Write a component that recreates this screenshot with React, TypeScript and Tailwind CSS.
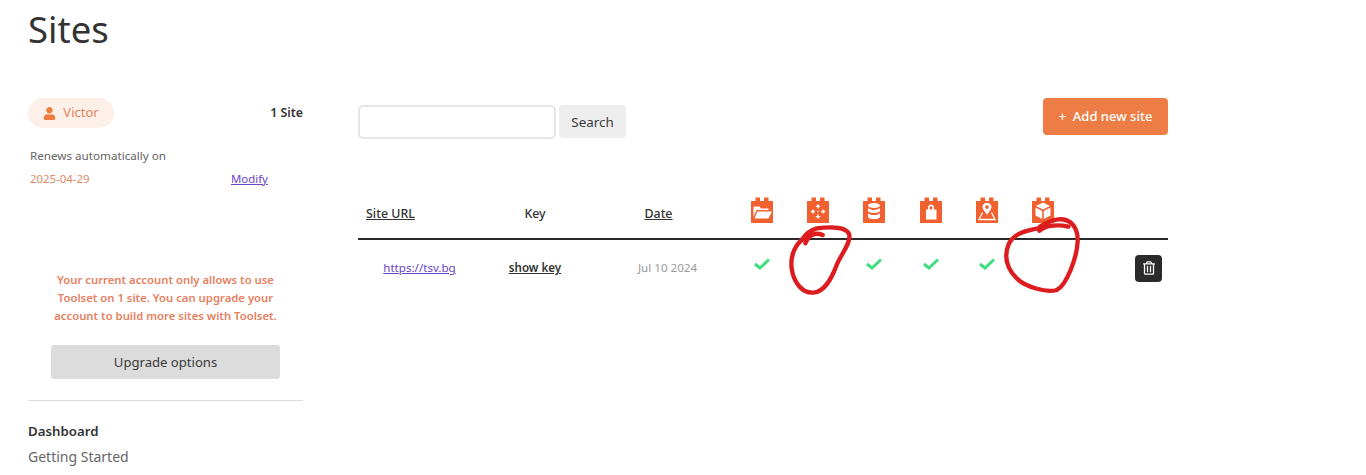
import { FaUser, FaRegTrashAlt } from 'react-icons/fa';

// Each product icon is the same orange plugin body with a different white glyph
const glyphs = [
  // folder
  <>
    <path d="M2.5 10 V20 L5.5 13 H17.5 V11.5 H10 L8.5 9.5 H3 Z" fill="white" />
    <path d="M6.3 14.5 H21 L17.5 21.5 H3.4 Z" fill="white" />
  </>,
  // arrows
  <>
    <path d="M11 7 L13.5 10 H11.7 V11.5 H10.3 V10 H8.5 Z M11 22 L13.5 19 H11.7 V17.5 H10.3 V19 H8.5 Z" fill="white" />
    <path d="M3.5 14.5 L6.5 12 V13.8 H8 V15.2 H6.5 V17 Z M18.5 14.5 L15.5 12 V13.8 H14 V15.2 H15.5 V17 Z" fill="white" />
    <circle cx="11" cy="14.5" r="0.8" fill="white" />
  </>,
  // database
  <>
    <ellipse cx="11" cy="8.5" rx="6" ry="2.5" fill="white" />
    <path d="M5 10.8 C6 13.6 16 13.6 17 10.8 V14 C16 16.6 6 16.6 5 14 Z" fill="white" />
    <path d="M5 16 C6 18.8 16 18.8 17 16 V20 C16 23 6 23 5 20 Z" fill="white" />
  </>,
  // bag
  <path
    fillRule="evenodd"
    d="M6 12.5 H8 V10.5 C8 6.5 14 6.5 14 10.5 V12.5 H16.5 V22.5 H6 Z M9.6 12.5 H12.4 V10.5 C12.4 8.7 9.6 8.7 9.6 10.5 Z"
    fill="white"
  />,
  // map pin
  <>
    <path
      fillRule="evenodd"
      d="M11 6 C7.8 6 6.5 8.2 6.5 10 C6.5 12.5 9.5 15.5 11 18 C12.5 15.5 15.5 12.5 15.5 10 C15.5 8.2 14.2 6 11 6 Z M11 8.2 A1.9 1.9 0 1 1 11 12 A1.9 1.9 0 1 1 11 8.2 Z"
      fill="white"
    />
    <path d="M6.5 15.5 L3 22.5 H19 L15.5 15.5" fill="none" stroke="white" strokeWidth="1.3" />
  </>,
  // cube
  <>
    <path d="M11 5.5 L18 9 L11 12.5 L4 9 Z" fill="white" />
    <path d="M3.5 10.5 L10.2 14 V22 L3.5 18.5 Z" fill="white" />
    <path d="M18.5 10.5 L11.8 14 V22 L18.5 18.5 Z" fill="white" />
  </>,
];

function ProductIcon({ index }: { index: number }) {
  return (
    <svg width="22" height="26" viewBox="0 0 22 26">
      <path d="M0 4 H4.5 V0.5 H9 V4 H13 V0.5 H17.5 V4 H22 V26 H0 Z" fill="#f1602f" />
      {glyphs[index]}
    </svg>
  );
}

const installed = [true, false, true, true, true, false];

function Sidebar() {
  return (
    <aside className="w-[275px] shrink-0">
      <div className="flex items-center justify-between">
        <span className="flex h-[30px] w-[86px] items-center justify-center gap-[7px] rounded-full bg-[#fdf0e9] text-[13px] text-[#e8825a]">
          <FaUser className="h-[13px] w-[13px] text-[#f07c42]" />
          Victor
        </span>
        <span className="text-[12.3px] font-semibold text-[#333]">1 Site</span>
      </div>
      <p className="mt-[19px] pl-[2px] text-[11.65px] leading-[18px] text-[#666]">Renews automatically on</p>
      <div className="mt-[5px] flex pl-[2px] text-[11.4px] leading-[18px]">
        <span className="w-[201px] text-[#e08a68]">2025-04-29</span>
        <a className="text-[#6a45c9] underline">Modify</a>
      </div>
      <p className="mt-[83px] text-center text-[11.3px] leading-[18px] font-semibold text-[#e8805f]">
        Your current account only allows to use
        <br />
        Toolset on 1 site. You can upgrade your
        <br />
        account to build more sites with Toolset.
      </p>
      <button className="mx-auto mt-[20px] block h-[34px] w-[229px] rounded-[3px] bg-[#dcdcdc] pt-[1px] text-[13.1px] text-[#3a3a3a]">
        Upgrade options
      </button>
      <div className="mt-[21px] border-t border-[#dddddd]" />
      <p className="mt-[20px] text-[13.25px] leading-[20px] font-semibold text-[#333]">Dashboard</p>
      <p className="mt-[6px] text-[14px] leading-[20px] text-[#666]">Getting Started</p>
    </aside>
  );
}

function SitesTable() {
  return (
    <div className="mt-[62px]">
      <div className="flex h-[43px] items-start border-b-2 border-[#2b2b2b] text-[12.4px] leading-[20px] font-medium text-[#333]">
        <span className="mt-[7px] w-[123px] pl-2 underline">Site URL</span>
        <span className="mt-[7px] w-[108px] text-center">Key</span>
        <span className="mt-[7px] w-[145px] pr-[6px] text-center underline">Date</span>
        {installed.map((_, i) => (
          <span key={i} className="flex w-[56.2px] justify-center">
            <ProductIcon index={i} />
          </span>
        ))}
      </div>
      <div className="flex h-[56px] items-center text-[11.6px]">
        <a className="w-[123px] text-center text-[#6a45c9] underline">https://tsv.bg</a>
        <a className="w-[108px] text-center font-semibold text-[#333] underline">show key</a>
        <span className="w-[145px] pl-[12px] text-center text-[#999]">Jul 10 2024</span>
        {installed.map((ok, i) => (
          <span key={i} className="flex w-[56.2px] justify-center pb-[8px]">
            {ok && (
              <svg width="16" height="12" viewBox="0 0 16 12" fill="none" stroke="#3fdd7d" strokeWidth="3">
                <path d="M1 6 L6 10 L15 1.5" />
              </svg>
            )}
          </span>
        ))}
        <button className="ml-auto mr-[6px] flex h-[27px] w-[27px] items-center justify-center rounded-[4px] bg-[#2b2b2b]">
          <FaRegTrashAlt className="h-[14px] w-[12px] text-white" />
        </button>
      </div>
    </div>
  );
}

export default function App() {
  return (
    <div
      className="relative h-[475px] overflow-hidden bg-white pl-[28px]"
      style={{ fontFamily: '"Noto Sans", sans-serif' }}
    >
      <h1 className="pt-[5px] text-[36.5px] leading-[48px] text-[#333]">Sites</h1>
      <div className="mt-[45px] flex">
        <Sidebar />
        <main className="ml-[55px] w-[810px]">
          <div className="flex h-[37px] items-start justify-between">
            <div className="mt-[7px] flex gap-[3px]">
              <input className="h-[34px] w-[198px] rounded-[5px] border-2 border-[#e6e6e6]" />
              <button className="h-[33px] w-[67px] rounded-[4px] bg-[#eeeeee] pt-[1px] text-[13.4px] text-[#3a3a3a]">
                Search
              </button>
            </div>
            <button className="h-[37px] w-[125px] rounded-[4px] bg-[#ee7d45] text-[13px] font-medium text-white">
              +&nbsp;&nbsp;Add new site
            </button>
          </div>
          <SitesTable />
        </main>
      </div>
      {/* hand-drawn red annotation circles on top of the screenshot */}
      <svg
        className="absolute left-[730px] top-[185px]"
        width="360"
        height="120"
        viewBox="0 0 1080 360"
        fill="none"
        stroke="#dd1c1f"
        strokeWidth="13"
        strokeLinecap="round"
      >
        <path d="M278 150 C260 142 238 145 226 175 M222 160 C198 175 180 210 185 250 C190 290 215 325 250 323 C285 320 305 280 320 240 C335 205 362 175 358 150 C352 125 300 125 260 130 C240 135 225 150 215 165" />
        <path d="M1015 125 C985 118 950 120 928 137 M950 125 C900 135 850 140 835 180 C822 215 830 250 860 280 C885 305 950 325 980 315 C1010 300 1040 220 1043 170 C1045 125 1020 100 985 103 C965 105 945 115 930 125" />
      </svg>
    </div>
  );
}
